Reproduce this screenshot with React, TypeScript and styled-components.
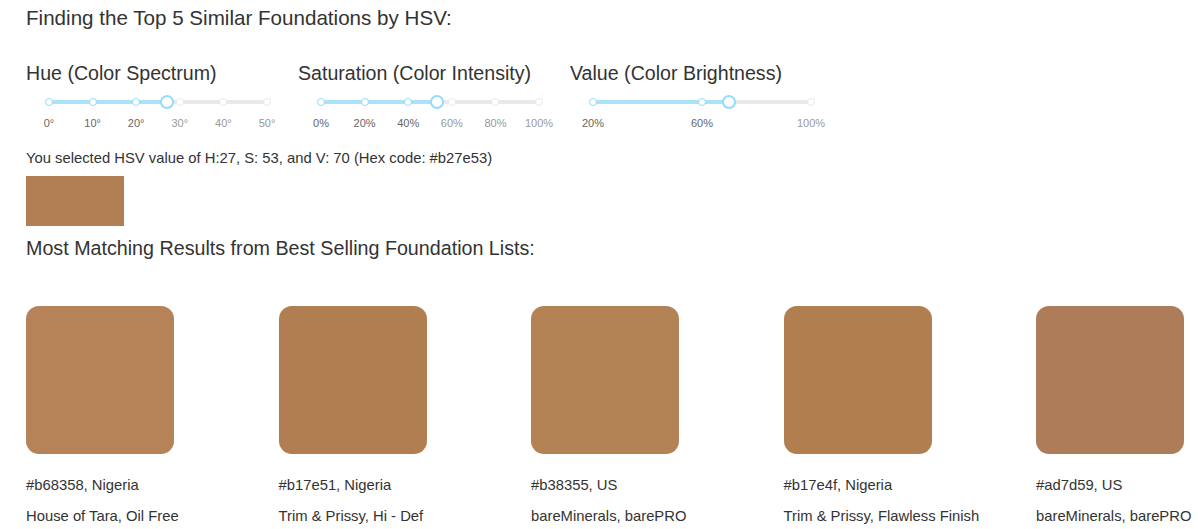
import React, { FC } from 'react';
import styled, { createGlobalStyle, css } from 'styled-components';

const GlobalStyle = createGlobalStyle`
  html, body {
    margin: 0;
    padding: 0;
    background: #ffffff;
  }
  body {
    font-family: 'Liberation Sans', Arial, sans-serif;
    color: #333333;
  }
`;

interface SliderProps {
  label: string;
  min: number;
  max: number;
  value: number;
  marks: number[];
  unit: string;
}

const sliders: SliderProps[] = [
  { label: 'Hue (Color Spectrum)', min: 0, max: 50, value: 27, marks: [0, 10, 20, 30, 40, 50], unit: '°' },
  { label: 'Saturation (Color Intensity)', min: 0, max: 100, value: 53, marks: [0, 20, 40, 60, 80, 100], unit: '%' },
  { label: 'Value (Color Brightness)', min: 20, max: 100, value: 70, marks: [20, 60, 100], unit: '%' },
];

interface Result {
  hex: string;
  country: string;
  name: string;
}

const results: Result[] = [
  { hex: '#b68358', country: 'Nigeria', name: 'House of Tara, Oil Free' },
  { hex: '#b17e51', country: 'Nigeria', name: 'Trim & Prissy, Hi - Def' },
  { hex: '#b38355', country: 'US', name: 'bareMinerals, barePRO' },
  { hex: '#b17e4f', country: 'Nigeria', name: 'Trim & Prissy, Flawless Finish' },
  { hex: '#ad7d59', country: 'US', name: 'bareMinerals, barePRO' },
];

const pct = (v: number, min: number, max: number) => ((v - min) / (max - min)) * 100;

const Slider: FC<SliderProps> = ({ label, min, max, value, marks, unit }) => {
  const pos = pct(value, min, max);
  return (
    <SliderGroup>
      <SliderLabel>{label}</SliderLabel>
      <SliderBody>
        <Rail>
          <Track style={{ width: `${pos}%` }} />
          {marks.map(m => (
            <Dot key={m} $active={m <= value} style={{ left: `${pct(m, min, max)}%` }} />
          ))}
          <Handle style={{ left: `${pos}%` }} />
        </Rail>
        <Marks>
          {marks.map(m => (
            <MarkText key={m} $active={m <= value} style={{ left: `${pct(m, min, max)}%` }}>
              {m}
              {unit}
            </MarkText>
          ))}
        </Marks>
      </SliderBody>
    </SliderGroup>
  );
};

const ResultCard: FC<{ data: Result }> = ({ data }) => (
  <Card>
    <ColorTile $color={data.hex} />
    <CardLine>
      {data.hex}, {data.country}
    </CardLine>
    <CardLine>{data.name}</CardLine>
  </Card>
);

export default function App() {
  return (
    <Page>
      <GlobalStyle />
      <Heading>Finding the Top 5 Similar Foundations by HSV:</Heading>
      <SliderRow>
        {sliders.map(s => (
          <Slider key={s.label} {...s} />
        ))}
      </SliderRow>
      <Selected>You selected HSV value of H:27, S: 53, and V: 70 (Hex code: #b27e53)</Selected>
      <Swatch $color="#b27e53" />
      <SubHeading>Most Matching Results from Best Selling Foundation Lists:</SubHeading>
      <CardRow>
        {results.map((r, i) => (
          <ResultCard key={i} data={r} />
        ))}
      </CardRow>
    </Page>
  );
}

const Page = styled.div`
  padding: 6px 0 0 26px;
  width: 1198px;
  height: 529px;
  box-sizing: border-box;
  overflow: hidden;
`;

const Heading = styled.h1`
  margin: 0;
  font-size: 20.6px;
  font-weight: 400;
  line-height: 24px;
  color: #333333;
`;

const SliderRow = styled.div`
  display: flex;
  margin-top: 31px;
`;

const SliderGroup = styled.div`
  width: 272px;
  display: flex;
  flex-direction: column;
`;

const SliderLabel = styled.div`
  font-size: 19.6px;
  line-height: 24px;
  white-space: nowrap;
  color: #333333;
`;

const SliderBody = styled.div`
  margin-left: 23px;
  width: 218px;
  padding-top: 15px;
`;

const Rail = styled.div`
  position: relative;
  height: 4px;
  border-radius: 2px;
  background: #e9e9e9;
`;

const Track = styled.div`
  height: 4px;
  border-radius: 2px;
  background: #abe2fb;
`;

const Dot = styled.span<{ $active: boolean }>`
  position: absolute;
  top: -2px;
  width: 8px;
  height: 8px;
  margin-left: -4px;
  box-sizing: border-box;
  border-radius: 50%;
  background: #ffffff;
  ${({ $active }) => css`
    border: 1.5px solid ${$active ? '#96dbfa' : '#e9e9e9'};
  `}
`;

const Handle = styled.span`
  position: absolute;
  top: -5px;
  width: 14px;
  height: 14px;
  margin-left: -7px;
  box-sizing: border-box;
  border-radius: 50%;
  border: 2px solid #96dbfa;
  background: #ffffff;
`;

const Marks = styled.div`
  position: relative;
  height: 14px;
  margin-top: 12px;
`;

const MarkText = styled.span<{ $active: boolean }>`
  position: absolute;
  top: 0;
  transform: translateX(-50%);
  font-size: 11px;
  line-height: 14px;
  white-space: nowrap;
  color: ${({ $active }) => ($active ? '#666666' : '#999999')};
`;

const Selected = styled.div`
  margin-top: 19px;
  font-size: 14.8px;
  line-height: 18px;
  white-space: nowrap;
  color: #333333;
`;

const Swatch = styled.div<{ $color: string }>`
  margin-top: 9px;
  width: 98px;
  height: 50px;
  background: ${({ $color }) => $color};
`;

const SubHeading = styled.h2`
  margin: 10px 0 0;
  font-size: 19.7px;
  font-weight: 400;
  line-height: 24px;
  color: #333333;
`;

const CardRow = styled.div`
  display: flex;
  gap: 104.5px;
  margin-top: 46px;
`;

const Card = styled.div`
  width: 148px;
  flex-shrink: 0;
  display: flex;
  flex-direction: column;
`;

const ColorTile = styled.div<{ $color: string }>`
  width: 148px;
  height: 148px;
  border-radius: 13px;
  margin-bottom: 22px;
  background: ${({ $color }) => $color};
`;

const CardLine = styled.div`
  font-size: 14.8px;
  line-height: 18px;
  white-space: nowrap;
  color: #333333;
  & + & {
    margin-top: 13px;
  }
`;
